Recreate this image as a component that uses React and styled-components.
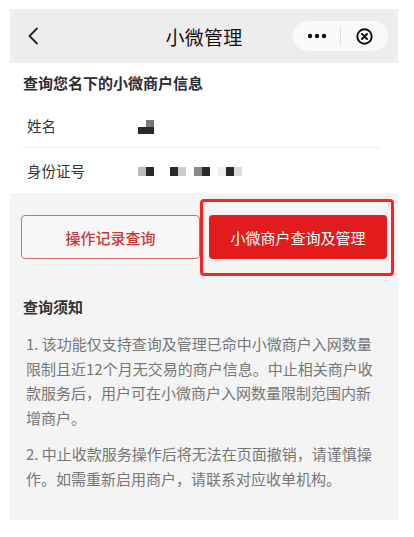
import React from 'react';
import styled, { createGlobalStyle } from 'styled-components';

const GlobalStyle = createGlobalStyle`
  body {
    margin: 0;
    background: #fff;
    font-family: "Noto Sans CJK SC", "Noto Sans", sans-serif;
  }
`;

const Frame = styled.div`
  width: 388px;
  margin: 9px 0 0 10px;
`;

const NavBar = styled.div`
  height: 54px;
  background: #ededed;
  display: grid;
  grid-template-columns: 1fr auto 1fr;
  align-items: center;
`;

const BackButton = styled.div`
  margin-left: 17px;
  display: flex;
  align-items: center;
`;

const NavTitle = styled.div`
  font-size: 19px;
  color: #111;
  letter-spacing: 0.3px;
`;

const Capsule = styled.div`
  justify-self: end;
  margin-right: 10px;
  width: 95px;
  height: 30px;
  border-radius: 15px;
  background: #f9f9f9;
  display: flex;
  align-items: center;
`;

const CapsuleHalf = styled.div`
  flex: 1;
  height: 100%;
  display: flex;
  align-items: center;
  justify-content: center;
`;

const CapsuleDivider = styled.div`
  width: 1px;
  height: 18px;
  background: #dedede;
`;

const InfoSection = styled.div`
  background: #fff;
  padding: 10px 18px 1px 13px;
`;

const SectionTitle = styled.div`
  font-size: 15px;
  line-height: 20px;
  font-weight: 700;
  color: ${p => p.color || '#2c2c36'};
  margin-bottom: ${p => p.gap || 10}px;
`;

const Row = styled.div`
  height: 44px;
  display: flex;
  align-items: center;
  padding-left: 4px;
  border-bottom: ${p => (p.last ? 'none' : '1px solid #f0f0f0')};
`;

const Label = styled.div`
  width: 111px;
  font-size: 14.5px;
  color: #333;
`;

const Mosaic = styled.div`
  display: grid;
  grid-template-columns: repeat(${p => p.cols}, 8px);
  grid-auto-rows: ${p => p.rowHeight || 9}px;
  margin-top: ${p => p.offset || 0}px;
`;

const Cell = styled.span`
  background: ${p => p.shade || 'transparent'};
`;

const ActionSection = styled.div`
  background: #f4f4f4;
  padding: 22px 11px 29px 11px;
`;

const ButtonRow = styled.div`
  display: flex;
  gap: 9px;
  margin-bottom: 38px;
`;

const OutlineButton = styled.div`
  width: 179px;
  height: 44px;
  box-sizing: border-box;
  border: 1px solid #d86a6a;
  border-radius: 4px;
  background: #f7f7f7;
  color: #cf3636;
  font-size: 15px;
  font-weight: 500;
  display: flex;
  align-items: center;
  justify-content: center;
`;

const PrimaryWrap = styled.div`
  position: relative;
  width: 178px;
`;

const PrimaryButton = styled.div`
  height: 44px;
  border-radius: 4px;
  background: #e21c1c;
  color: #fff;
  font-size: 15px;
  display: flex;
  align-items: center;
  justify-content: center;
`;

const Highlight = styled.div`
  position: absolute;
  left: -9px;
  right: -7px;
  top: -16px;
  bottom: -17px;
  border: 3px solid #ff1f1f;
  border-radius: 4px;
  pointer-events: none;
`;

const Notice = styled.div`
  padding-left: 2px;
`;

const Paragraph = styled.p`
  margin: 0 0 12px 3px;
  width: 350px;
  font-size: 15px;
  line-height: 24.5px;
  color: #767676;
  &:last-child {
    margin-bottom: 0;
  }
`;

const ChevronLeft = () => (
  <svg width="14" height="18" viewBox="0 0 14 18" fill="none">
    <path d="M10 1.5L2.5 9L10 16.5" stroke="#222" strokeWidth="1.8" strokeLinecap="round" strokeLinejoin="round" />
  </svg>
);

const Dots = () => (
  <svg width="20" height="6" viewBox="0 0 20 6">
    <circle cx="3" cy="3" r="2.2" fill="#111" />
    <circle cx="10" cy="3" r="2.2" fill="#111" />
    <circle cx="17" cy="3" r="2.2" fill="#111" />
  </svg>
);

const CloseCircle = () => (
  <svg width="17" height="17" viewBox="0 0 17 17" fill="none">
    <circle cx="8.5" cy="8.5" r="7.2" stroke="#111" strokeWidth="2" />
    <path d="M6 6L11 11M11 6L6 11" stroke="#111" strokeWidth="2" strokeLinecap="round" />
  </svg>
);

const nameCells = [null, '#777', '#2a2a2a', '#2a2a2a'];
const idCells = [
  '#bbb', '#2a2a2a', null, null, '#2a2a2a', '#ccc', null, '#888', '#2a2a2a', null, '#eee', '#2a2a2a', '#ddd',
];

export default function App() {
  return (
    <Frame>
      <GlobalStyle />
      <NavBar>
        <BackButton>
          <ChevronLeft />
        </BackButton>
        <NavTitle>小微管理</NavTitle>
        <Capsule>
          <CapsuleHalf>
            <Dots />
          </CapsuleHalf>
          <CapsuleDivider />
          <CapsuleHalf>
            <CloseCircle />
          </CapsuleHalf>
        </Capsule>
      </NavBar>

      <InfoSection>
        <SectionTitle>查询您名下的小微商户信息</SectionTitle>
        <Row>
          <Label>姓名</Label>
          <Mosaic cols={2} rowHeight={7} offset={4}>
            {nameCells.map((c, i) => <Cell key={i} shade={c} />)}
          </Mosaic>
        </Row>
        <Row last>
          <Label>身份证号</Label>
          <Mosaic cols={13} rowHeight={9} offset={2}>
            {idCells.map((c, i) => <Cell key={i} shade={c} />)}
          </Mosaic>
        </Row>
      </InfoSection>

      <ActionSection>
        <ButtonRow>
          <OutlineButton>操作记录查询</OutlineButton>
          <PrimaryWrap>
            <PrimaryButton>小微商户查询及管理</PrimaryButton>
            <Highlight />
          </PrimaryWrap>
        </ButtonRow>
        <Notice>
          <SectionTitle color="#333" gap={15}>查询须知</SectionTitle>
          <Paragraph>
            1. 该功能仅支持查询及管理已命中小微商户入网数量限制且近12个月无交易的商户信息。中止相关商户收款服务后，用户可在小微商户入网数量限制范围内新增商户。
          </Paragraph>
          <Paragraph>
            2. 中止收款服务操作后将无法在页面撤销，请谨慎操作。如需重新启用商户，请联系对应收单机构。
          </Paragraph>
        </Notice>
      </ActionSection>
    </Frame>
  );
}
